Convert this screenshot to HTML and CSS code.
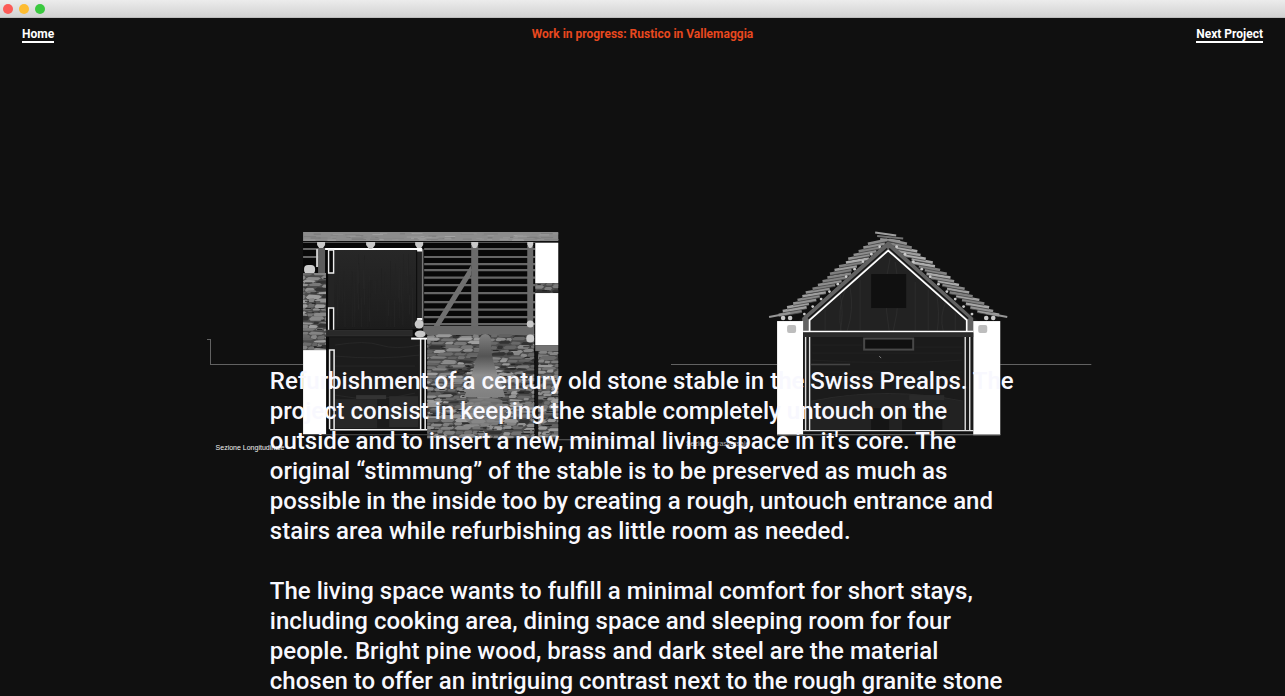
FILE: index.html
```
<!DOCTYPE html>
<html lang="en">
<head>
<meta charset="utf-8">
<meta name="viewport" content="width=device-width, initial-scale=1">
<title>Rustico in Vallemaggia</title>
<link rel="stylesheet" href="styles.css">
</head>
<body>
<div class="titlebar">
  <button class="dot dot-close" aria-label="Close"></button>
  <button class="dot dot-min" aria-label="Minimize"></button>
  <button class="dot dot-max" aria-label="Zoom"></button>
</div>
<header class="header">
  <a class="nav-link" href="#home">Home</a>
  <h1 class="title">Work in progress: Rustico in Vallemaggia</h1>
  <a class="nav-link nav-next" href="#next">Next Project</a>
</header>
<main class="stage">
  <div class="sections">
    <figure class="section">
      <svg viewBox="206 230 434 212" role="img" aria-label="Longitudinal section">
        <defs>
          <linearGradient id="bell" x1="0" y1="0" x2="0" y2="1">
            <stop offset="0" stop-color="#808080"/><stop offset=".35" stop-color="#545454"/><stop offset=".65" stop-color="#8e8e8e"/><stop offset="1" stop-color="#808080"/>
          </linearGradient>
          <linearGradient id="panel" x1="0" y1="0" x2="0" y2="1">
            <stop offset="0" stop-color="#272727"/><stop offset="1" stop-color="#1c1c1c"/>
          </linearGradient>
          <clipPath id="clip-a"><rect x="303" y="273" width="23" height="77"/></clipPath>
          <clipPath id="clip-b"><rect x="427" y="334" width="107" height="104"/></clipPath>
          <clipPath id="clip-c"><rect x="535" y="283" width="23" height="10"/></clipPath>
          <clipPath id="clip-d"><rect x="538" y="351" width="20" height="87"/></clipPath>
          <clipPath id="clip-e"><rect x="303" y="232" width="255" height="9"/></clipPath>
        </defs>
        <path d="M207 339.5h3.500v25H303M558 439.500h55" fill="none" stroke="#626262"/>
        <rect x="303" y="232" width="255" height="9" fill="#8c8c8c"/>
        <g clip-path="url(#clip-e)" data-grain="303 233 255 7"></g>
        <path d="M303 242.500h255" stroke="#555"/>
        <rect x="303" y="243" width="232" height="193" fill="#080808"/>
        <path d="M303 249h17M303 257h17" stroke="#666" stroke-width="2"/>
        <rect x="318" y="248" width="7" height="25" fill="#5c5c5c"/>
        <rect x="316" y="249" width="2" height="18" fill="#ccc"/>
        <rect x="304" y="265" width="11" height="9" rx="4" fill="#ccc"/>
        <g clip-path="url(#clip-a)" data-stones="303 273 23 77 7"></g>
        <rect x="303" y="350" width="23" height="84" fill="#fff"/>
        <path d="M303 434.500h232" stroke="#555"/>
        <rect x="328" y="250" width="95" height="79" fill="#242424"/>
        <rect x="334" y="250" width="82" height="79" fill="url(#panel)"/>
        <g data-wood="336 252 78 75"></g>
        <path d="M325 249h97" stroke="#fff" stroke-width="2"/>
        <path d="M328.500 250v23h5v-23zM328.500 330v-22h5v22" fill="#0a0a0a" stroke="#eee" stroke-width="1.400"/>
        <path d="M416.500 251v67" stroke="#0b0b0b"/><path d="M422.500 249v78" stroke="#777" stroke-width="1.500"/>
        <path d="M417 250.500h5M417 319h5" stroke="#fff" stroke-width="2"/>
        <rect x="326" y="330" width="86" height="6" fill="#292929" stroke="#3b3b3b" stroke-width=".6"/>
        <rect x="329" y="337" width="91" height="92" fill="#1c1c1c"/>
        <path d="M335 345q30-5 45 0t40 0M335 356q45 4 84-1M335 366h80M335 395q40 8 80-2" fill="none" stroke="#2b2b2b" stroke-width=".7"/>
        <rect x="335" y="399" width="42" height="29" fill="#272727"/><rect x="356" y="395" width="30" height="4" fill="#333"/><rect x="389" y="396" width="29" height="31" fill="#2b2b2b"/>
        <path d="M329.500 429v-79h4.500v79M330 429.500h98M420.500 338v91M425 338v91" fill="none" stroke="#eee" stroke-width="1.500"/>
        <path d="M411 338.500h17" stroke="#fff" stroke-width="2"/>
        <g stroke="#666" stroke-width="2.200">
          <path d="M424 249h111M424 257h111M424 264h111M424 270h111M424 277.500h111M424 285h111M424 293h111M424 302h111M424 309.500h111M424 317h111M424 324h111"/>
        </g>
        <path d="M433 327l38-62v10l-32 52z" fill="#707070"/>
        <path d="M471 246h7v81h-7zM527 246h6v81h-6z" fill="#6a6a6a"/>
        <path d="M423 326h111v9H427l-4-4z" fill="#686868"/>
        <g clip-path="url(#clip-b)"><g data-stones="427 335 107 103 19"></g></g>
        <path d="M479 350v-10q1-6 6-6t6 6v10q1 10 6 23t8 24h-41q4-10 8-24t7-23z" fill="url(#bell)"/>
        <path d="M469 400q16-5 33 0l2 20-8 5h-25l-8-8z" fill="#808080" opacity=".75"/>
        <g fill="#c9c9c9">
          <path d="M317 242h8v3l-2 3h-4l-2-3zM366 242h9v3l-3 4h-3l-3-4zM415 242h8v3l-2 3h-4l-2-3zM471 242h7v3l-2 3h-3l-2-3zM527 242h6v3l-2 3h-2l-2-3z"/>
          <circle cx="419" cy="324" r="4.500"/><ellipse cx="420" cy="334" rx="5.500" ry="3.500"/>
          <circle cx="530" cy="324" r="3.500"/><circle cx="530" cy="338.500" r="4"/>
        </g>
        <rect x="535" y="243" width="23" height="194" fill="#151515"/>
        <rect x="535" y="243" width="23" height="40" fill="#fff"/>
        <g clip-path="url(#clip-c)" data-stones="535 283 23 10 31"></g>
        <rect x="535" y="293" width="23" height="52" fill="#fff"/>
        <rect x="535" y="345" width="23" height="6" fill="#727272"/>
        <g clip-path="url(#clip-d)" data-stones="538 351 20 87 43"></g>
      </svg>
      <figcaption class="caption caption-long">Sezione Longitudinale</figcaption>
    </figure>
    <figure class="section">
      <svg viewBox="670 230 422 212" role="img" aria-label="Cross section">
        <path d="M671 364.500h106M1000 364.500h91" stroke="#626262"/>
        <path d="M888 243l-90 78h180z" fill="#191919"/>
        <path d="M888 250l-79 70v12h158v-12z" fill="#222"/>
        <g fill="none" stroke="#2f2f2f" stroke-width=".8">
          <path d="M840 294q4 20 0 37M845 290q-8 20-4 41M850 288q4 22-3 43M890 258q-8 32-1 73M895 262q7 35-2 69M936 292q4 20 1 39M946 301q-7 15-3 30M825 310v20M860 280v50M915 282v49M955 312v18M928 290v40"/>
        </g>
        <g data-roof="888"></g>
        <path d="M888 241l-86 77v14h7v-11l79-71 79 71v11h6v-14z" fill="#626262"/>
        <path d="M887 248.500l-79 70M889 248.500l79 70" stroke="#161616" stroke-width="1.500"/>
        <path d="M809.500 332v-12L888 250.500l78.500 69.500v12" fill="none" stroke="#fff" stroke-width="1.700"/>
        <rect x="871" y="274" width="35" height="34" fill="#101010"/>
        <rect x="777" y="321" width="26" height="114" fill="#fff"/><rect x="973" y="321" width="27" height="114" fill="#fff"/>
        <rect x="787" y="325" width="9" height="8" rx="2" fill="#bdbdbd"/><rect x="978" y="325" width="9" height="8" rx="2" fill="#bdbdbd"/>
        <rect x="803" y="332" width="170" height="98" fill="#1b1b1b"/>
        <rect x="803" y="333" width="170" height="4" fill="#2b2b2b"/>
        <g fill="none" stroke="#242424" stroke-width=".7"><path d="M812 345h50M915 347h48M812 353h150M812 360q80 5 150 0M812 372h150M812 381h150"/></g>
        <path d="M811 401q76-15 152 0v29H811z" fill="#222"/><path d="M811 401q76-15 152 0" fill="none" stroke="#2a2a2a"/>
        <rect x="871" y="408" width="18" height="22" fill="#151515"/><rect x="902" y="408" width="40" height="22" fill="#171717"/>
        <rect x="909" y="395" width="35" height="5" fill="#2a2a2a"/>
        <path d="M811 364.500h39" stroke="#444" stroke-width="1.500"/>
        <rect x="864" y="338.500" width="49" height="11" fill="#101010" stroke="#484848" stroke-width="2"/>
        <path d="M879 356l2 2" stroke="#999" stroke-width=".8"/>
        <path d="M803 331.500h170" stroke="#fff" stroke-width="1.500"/>
        <path d="M805.500 337v93M809.500 337v93M965 337v93M969.500 337v93M803 430.500h170" stroke="#ddd" stroke-width="1.400"/>
        <path d="M777 434.500h223" stroke="#777"/>
      </svg>
      <figcaption class="caption caption-cross">Sezione Trasversale</figcaption>
    </figure>
  </div>
  <article class="copy">
    <p>Refurbishment of a century old stone stable in the Swiss Prealps. The project consist in keeping the stable completely untouch on the outside and to insert a new, minimal living space in it's core. The original “stimmung” of the stable is to be preserved as much as possible in the inside too by creating a rough, untouch entrance and stairs area while refurbishing as little room as needed.</p>
    <p>The living space wants to fulfill a minimal comfort for short stays, including cooking area, dining space and sleeping room for four people. Bright pine wood, brass and dark steel are the material chosen to offer an intriguing contrast next to the rough granite stone</p>
  </article>
</main>
<script src="drawing.js"></script>
</body>
</html>
```
FILE: styles.css
```
* { box-sizing: border-box; }
body {
  margin: 0;
  min-height: 100vh;
  background: #101010;
  color: #f8f8fe;
  font-family: Roboto, "Liberation Sans", sans-serif;
  overflow-x: hidden;
}
.titlebar {
  display: flex;
  align-items: center;
  gap: 6px;
  height: 18px;
  padding: 0 3px;
  background: linear-gradient(#ececec, #d2d2d2);
  border-bottom: 1px solid #bdbdbd;
}
.dot {
  width: 10px;
  height: 10px;
  padding: 0;
  border: 0;
  border-radius: 50%;
}
.dot-close { background: #fc5b57; }
.dot-min { background: #fdbc31; }
.dot-max { background: #3ac93f; }
.header {
  display: grid;
  grid-template-columns: 1fr auto 1fr;
  align-items: start;
  padding: 9px 22px 0;
  font-size: 12px;
  font-weight: 700;
  line-height: 14px;
}
.title {
  margin: 0;
  font: inherit;
  color: #e8481f;
}
.nav-link {
  justify-self: start;
  color: #fff;
  text-decoration: none;
  border-bottom: 2px solid #fff;
}
.nav-next { justify-self: end; }
.stage { display: grid; }
.sections, .copy { grid-area: 1 / 1; }
.sections {
  display: grid;
  grid-template-columns: 434fr 422fr;
  gap: 30px;
  align-items: start;
  padding: 187px 15% 0 16%;
}
.section {
  position: relative;
  margin: 0;
}
.section svg { display: block; width: 100%; }
.caption {
  position: absolute;
  top: 100%;
  font: 7px/10px "Liberation Sans", sans-serif;
  color: #f0f0f0;
}
.caption-long { left: 10px; margin-top: 1px; }
.caption-cross { left: 16px; margin-top: -3px; color: #aaa; }
.copy {
  position: relative;
  justify-self: center;
  width: 58%;
  padding-top: 323px;
  font-size: 24px;
  font-weight: 500;
  line-height: 30px;
}
.copy p { margin: 0 0 30px; }
.copy p:last-child { margin-bottom: 0; }
```
FILE: drawing.js
```
// Fills the section drawings with masonry, wood grain and roof slates.
const NS = 'http://www.w3.org/2000/svg';

function random(seed) {
  let s = seed * 7919 + 17;
  return () => {
    s = (s * 1664525 + 1013904223) % 4294967296;
    return s / 4294967296;
  };
}

function add(parent, name, attrs) {
  const el = document.createElementNS(NS, name);
  for (const key in attrs) el.setAttribute(key, attrs[key]);
  parent.appendChild(el);
}

const grey = v => `rgb(${v},${v},${v})`;

// Dry stone wall: flat irregular blocks laid in courses.
document.querySelectorAll('[data-stones]').forEach(g => {
  const [x, y, w, h, seed] = g.dataset.stones.split(' ').map(Number);
  const r = random(seed);
  add(g, 'rect', { x, y, width: w, height: h, fill: '#4c4c4c' });
  for (let cy = y - 1; cy < y + h;) {
    const row = 2.5 + r() * 2.2;
    for (let cx = x - r() * 8; cx < x + w;) {
      const len = 5 + r() * 13;
      const top = cy + (r() - 0.5) * 2.4;
      const v = r() < 0.12 ? 50 : Math.floor(95 + r() * 65);
      add(g, 'path', {
        d: `M${cx} ${top + row * 0.6}L${cx + len * 0.2} ${top + r()}L${cx + len * 0.85} ${top + r()}L${cx + len} ${top + row * 0.5}L${cx + len * 0.8} ${top + row}L${cx + len * 0.1} ${top + row}z`,
        fill: grey(v)
      });
      cx += len;
    }
    cy += row;
  }
  for (let i = 0; i < w * h / 110; i++) {
    add(g, 'rect', { x: x + r() * w, y: y + r() * h, width: 3 + r() * 6, height: 0.8, fill: '#1c1c1c' });
  }
});

// Fine vertical grain on the timber panel.
document.querySelectorAll('[data-wood]').forEach(g => {
  const [x, y, w, h] = g.dataset.wood.split(' ').map(Number);
  const r = random(5);
  for (let i = 0; i < 60; i++) {
    const top = y + r() * h * 0.7;
    add(g, 'rect', { x: x + r() * w, y: top, width: 0.6, height: Math.min(10 + r() * 40, y + h - top), fill: grey(32 + Math.floor(r() * 9)) });
  }
});

// Mottled slab along the ridge.
document.querySelectorAll('[data-grain]').forEach(g => {
  const [x, y, w, h] = g.dataset.grain.split(' ').map(Number);
  const r = random(11);
  for (let i = 0; i < 90; i++) {
    add(g, 'rect', { x: x + r() * w, y: y + r() * h, width: 3 + r() * 12, height: 1, fill: grey(120 + Math.floor(r() * 45)) });
  }
});

// Overlapping slates on both slopes, mirrored about the ridge.
document.querySelectorAll('[data-roof]').forEach(g => {
  const ridge = Number(g.dataset.roof);
  const r = random(3);
  const slate = (x1, y1, x2, y2, v, thick = 2) =>
    add(g, 'path', { d: `M${x1} ${y1}L${x2} ${y2}`, stroke: grey(v), 'stroke-width': thick });
  [-1, 1].forEach(side => {
    for (let i = 0; i <= 19; i++) {
      const t = i / 19;
      const outer = 108 - 90 * t + r() * 3;
      const y = 314 - 71 * t;
      const inner = Math.max(outer - 21 - r() * 3, 1);
      slate(ridge + side * outer, y + 1, ridge + side * inner, y - 3, 125 + Math.floor(r() * 50), 3);
      slate(ridge + side * outer, y + 2.5, ridge + side * inner, y - 1.5, 75, 0.8);
      if (i % 2 === 0) {
        const edge = Math.max((y - 241) * 1.12 + 2, 3);
        add(g, 'circle', { cx: ridge + side * edge, cy: y, r: 1.4, fill: '#ccc' });
      }
    }
    slate(ridge + side * 119, 317, ridge + side * 98, 313, 150);
    add(g, 'circle', { cx: ridge + side * 105, cy: 318, r: 2.3, fill: '#ccc' });
    add(g, 'circle', { cx: ridge + side * 98, cy: 318, r: 2.3, fill: '#ccc' });
  });
  slate(875, 232.5, 896, 235.5, 160);
  slate(877, 236, 903, 238.5, 115);
  slate(880, 239, 900, 241, 145);
});
```
